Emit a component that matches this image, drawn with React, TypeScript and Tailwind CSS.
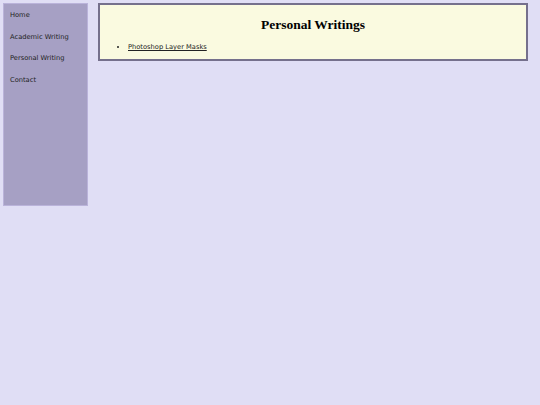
import React from 'react';

const links = ['Home', 'Academic Writing', 'Personal Writing', 'Contact'];

export default function App() {
  return (
    <div className="min-h-screen bg-[#e0def5] p-[3px] flex items-start font-['DejaVu_Sans',sans-serif]">
      <nav className="w-[85px] h-[203px] shrink-0 bg-[#a6a0c4] border border-[#bab3da] pl-[6px] pt-[7px] flex flex-col gap-[13.5px]">
        {links.map((label) => (
          <a key={label} href="#" className="text-[6.7px] leading-[8px] text-[#222222] no-underline">
            {label}
          </a>
        ))}
      </nav>
      <main className="ml-[10px] w-[430px] h-[58px] shrink-0 bg-[#fafae0] border-2 border-[#75708c] pt-[12px]">
        <h1 className="text-center text-[13.5px] leading-[16px] font-bold text-black font-['Liberation_Serif',serif]">
          Personal Writings
        </h1>
        <ul className="mt-[10px] list-disc pl-[28px] text-[6.7px] leading-[8px] text-[#222222]">
          <li>
            <a href="#" className="underline">Photoshop Layer Masks</a>
          </li>
        </ul>
      </main>
    </div>
  );
}
